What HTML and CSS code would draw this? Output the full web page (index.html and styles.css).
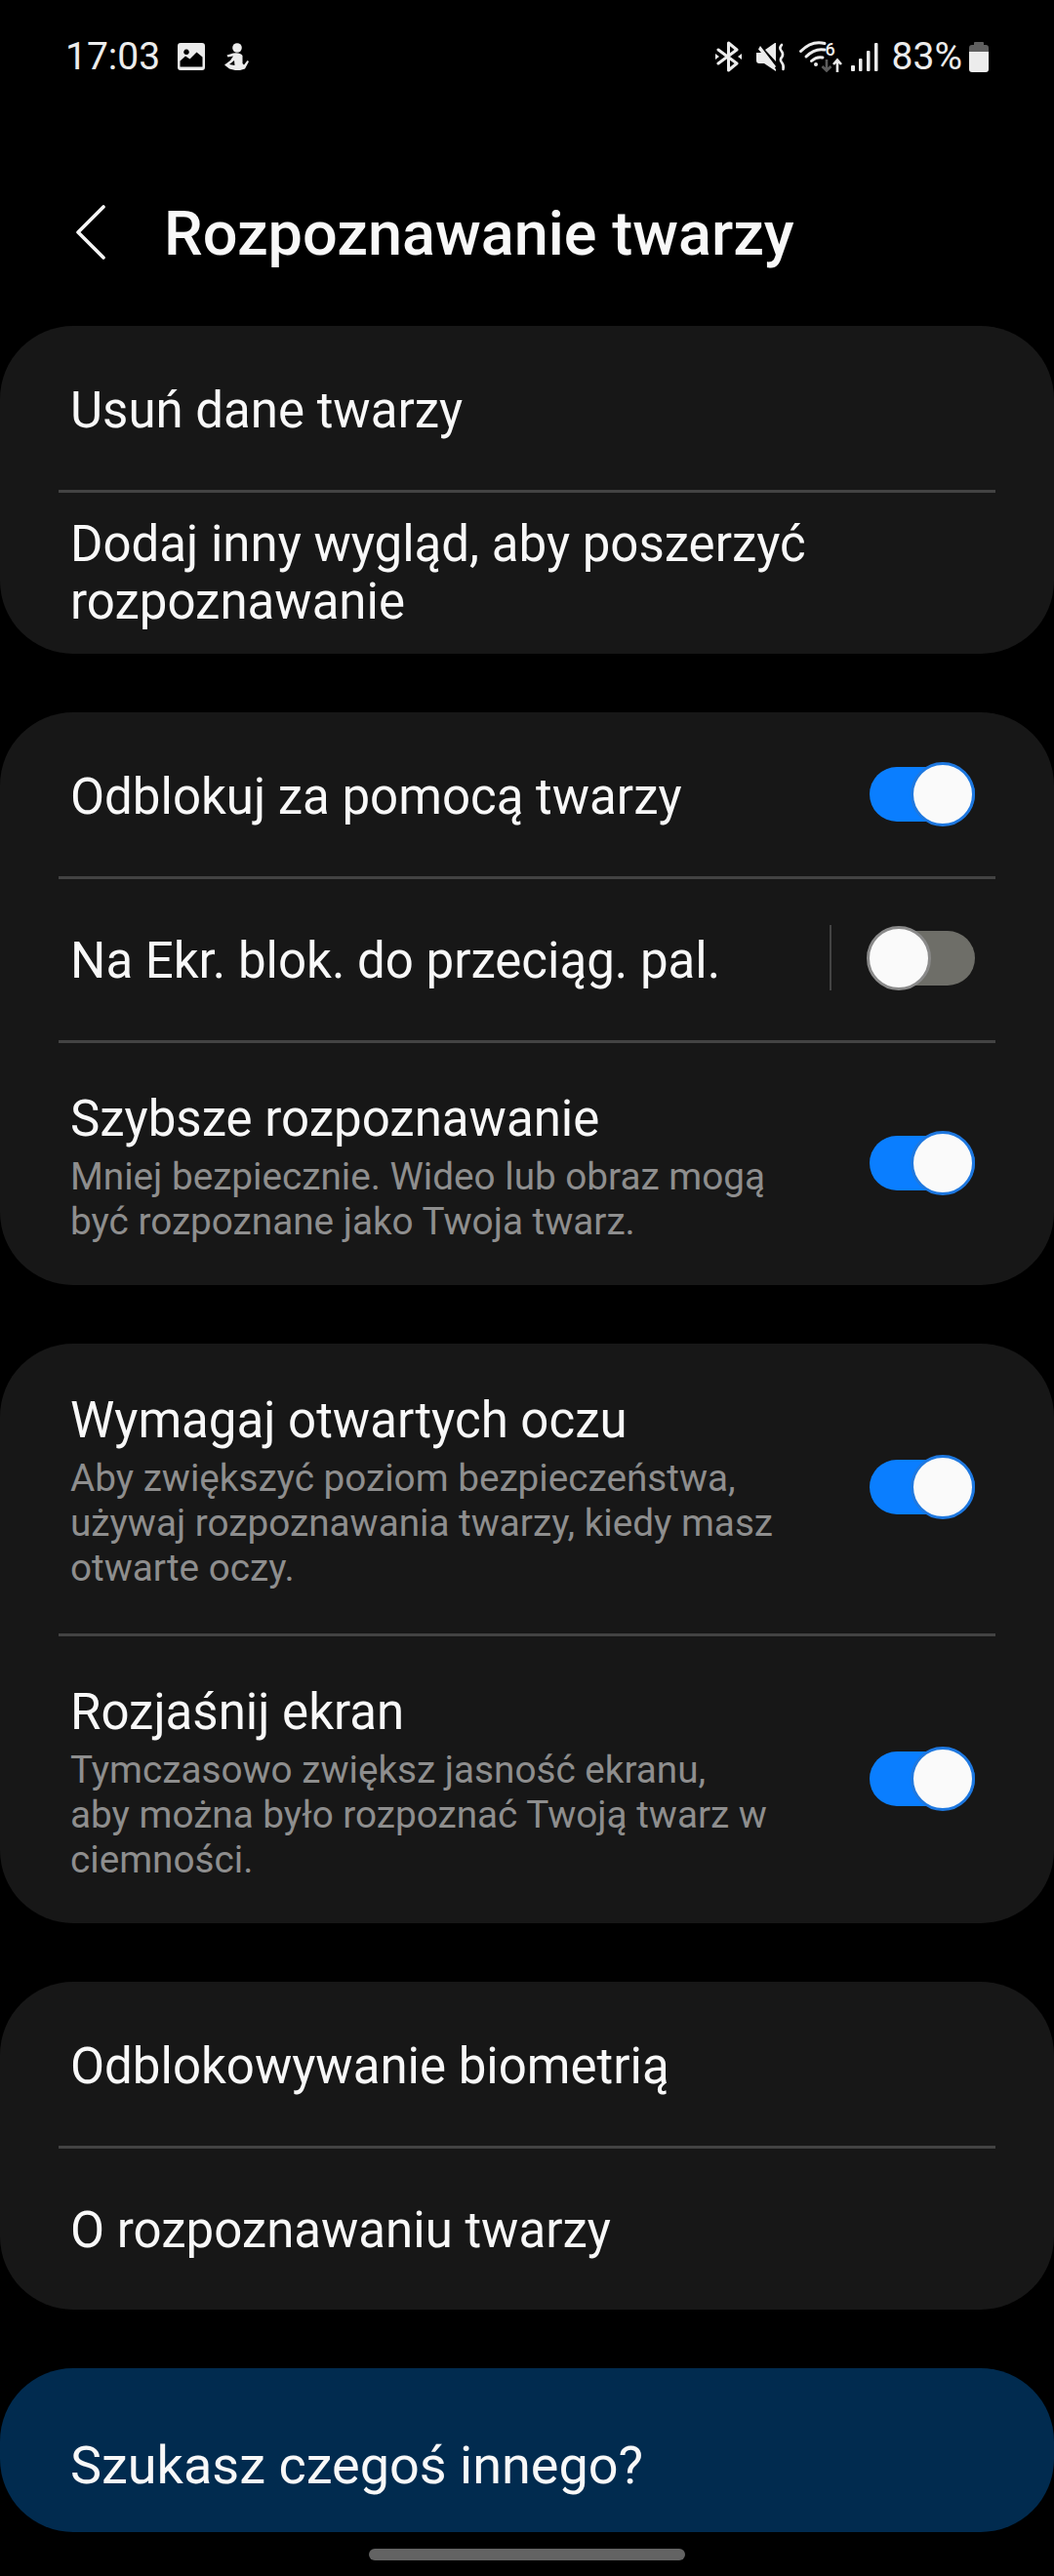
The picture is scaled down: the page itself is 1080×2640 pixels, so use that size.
FILE: index.html
```html
<!DOCTYPE html>
<html lang="pl">
<head>
<meta charset="utf-8">
<title>Rozpoznawanie twarzy</title>
<link rel="stylesheet" href="styles.css">
</head>
<body>
<div class="screen">
  <div class="status">
    <div class="status-left">
      <span class="time">17:03</span>
      <svg class="ic-img" viewBox="0 0 28 28"><path fill="#ececec" fill-rule="evenodd" d="M3 0h22a3 3 0 0 1 3 3v22a3 3 0 0 1-3 3H3a3 3 0 0 1-3-3V3a3 3 0 0 1 3-3zM2.500 24.500h23V14.500l-6-5-7 7-4.500-3-5.500 5zM9 6.500a2.800 2.800 0 1 0 .01 0z"/></svg>
      <svg class="ic-fig" viewBox="0 0 26 28"><circle cx="14" cy="5" r="4.800" fill="#ececec"/><path fill="#ececec" d="M10 10.500 L3.500 12.500 L4.500 14.500 L10 13.500 L7 18 L1 22.500 L6 26.500 L12 28 H17 L22 26.500 L26 19 L24.500 18 L21 22.500 L19.500 21 L19.500 13 Q17 9.500 10 10.500Z"/><path fill="#000" d="M6 22 L11 18 L11.500 23 Z"/></svg>
    </div>
    <div class="status-right">
      <svg class="ic-bt" viewBox="0 0 27 32"><path fill="none" stroke="#ececec" stroke-width="3" stroke-linejoin="round" stroke-linecap="round" d="M3 9 L22 23 L13.500 30 V2 L22 9 L3 23"/><path fill="#ececec" d="M0 13 L4 16 L0 19Z M27 13 L23 16 L27 19Z"/></svg>
      <svg class="ic-mute" viewBox="0 0 30 29"><path fill="#ececec" d="M0 10h5L2 6.500 4 3 20 24 18 27 13 23 Z"/><path fill="#ececec" d="M0 10h6l14 17v2L8 21H3a3 3 0 0 1-3-3z"/><path fill="#ececec" d="M9 7 19 0h1v19z"/><path fill="none" stroke="#ececec" stroke-width="2.600" stroke-linecap="round" d="M26 2q-3 3-.5 6t1 6q-3 3-.5 6t1.500 7"/></svg>
      <svg class="ic-wifi" viewBox="0 0 44 32"><g fill="none" stroke="#ececec" stroke-width="3" stroke-linecap="round"><path d="M1.500 10.500Q13-1 26 2.500"/><path d="M7 16Q16 7 26 9"/><path d="M12.500 20.500Q18 15.500 24 17"/></g><circle cx="17" cy="24" r="2" fill="#ececec"/><text x="26.500" y="15" class="wifi-six">6</text><path fill="none" stroke="#5c5c5c" stroke-width="2.600" d="M28 19V30M23.500 26l4.500 4.500 4.500-4.500"/><path fill="none" stroke="#ececec" stroke-width="2.600" d="M39 32V20M35 24l4-4.500 4 4.500"/></svg>
      <svg class="ic-sig" viewBox="0 0 28 29"><g fill="#ececec"><rect x="0" y="23" width="4" height="6" rx="1"/><rect x="8" y="16" width="3.500" height="13" rx="1"/><rect x="16" y="8" width="3.500" height="21" rx="1"/><rect x="24" y="0" width="3.500" height="29" rx="1"/></g></svg>
      <span class="pct">83%</span>
      <svg class="ic-bat" viewBox="0 0 20 31"><path fill="#5f5f5f" d="M6 0h8a1 1 0 0 1 1 1v2h2a3 3 0 0 1 3 3v4H0V6a3 3 0 0 1 3-3h2V1a1 1 0 0 1 1-1z"/><path fill="#ececec" d="M0 10h20v18a3 3 0 0 1-3 3H3a3 3 0 0 1-3-3z"/></svg>
    </div>
  </div>

  <header class="appbar">
    <svg class="back" viewBox="0 0 30 56"><path fill="none" stroke="#f5f5f5" stroke-width="3.600" stroke-linecap="round" stroke-linejoin="round" d="M28 2 2 28 28 54"/></svg>
    <h1 class="title">Rozpoznawanie twarzy</h1>
  </header>

  <section class="card">
    <div class="row h168"><div class="body"><div class="label">Usuń dane twarzy</div></div></div>
    <div class="row h168 lift"><div class="body two-line"><div class="label">Dodaj inny wygląd, aby poszerzyć rozpoznawanie</div></div></div>
  </section>

  <section class="card">
    <div class="row h168">
      <div class="body"><div class="label">Odblokuj za pomocą twarzy</div></div>
      <span class="sw on"><i></i></span>
    </div>
    <div class="row h168 lift">
      <div class="body"><div class="label">Na Ekr. blok. do przeciąg. pal.</div></div>
      <span class="vline"></span>
      <span class="sw off"><i></i></span>
    </div>
    <div class="row h251 lift">
      <div class="body has-sub">
        <div class="label">Szybsze rozpoznawanie</div>
        <div class="sub">Mniej bezpiecznie. Wideo lub obraz mogą<br>być rozpoznane jako Twoja twarz.</div>
      </div>
      <span class="sw on"><i></i></span>
    </div>
  </section>

  <section class="card">
    <div class="row h297 lift">
      <div class="body has-sub">
        <div class="label">Wymagaj otwartych oczu</div>
        <div class="sub">Aby zwiększyć poziom bezpieczeństwa,<br>używaj rozpoznawania twarzy, kiedy masz<br>otwarte oczy.</div>
      </div>
      <span class="sw on"><i></i></span>
    </div>
    <div class="row h297 lift">
      <div class="body has-sub">
        <div class="label">Rozjaśnij ekran</div>
        <div class="sub">Tymczasowo zwiększ jasność ekranu,<br>aby można było rozpoznać Twoją twarz w<br>ciemności.</div>
      </div>
      <span class="sw on"><i></i></span>
    </div>
  </section>

  <section class="card">
    <div class="row h168"><div class="body"><div class="label">Odblokowywanie biometrią</div></div></div>
    <div class="row h168 lift"><div class="body"><div class="label">O rozpoznawaniu twarzy</div></div></div>
  </section>

  <section class="card promo"><div class="label promo-label">Szukasz czegoś innego?</div></section>

  <div class="home"></div>
</div>
</body>
</html>
```
FILE: styles.css
```css
* { box-sizing: border-box; }
html, body { margin: 0; background: #000; }
.screen {
  width: 1080px;
  height: 2640px;
  overflow: hidden;
  background: #000;
  color: #f8f8f8;
  font-family: Roboto, "Noto Sans", sans-serif;
}
.status {
  display: flex;
  justify-content: space-between;
  align-items: center;
  height: 116px;
  padding: 0 67px 0 67px;
  color: #ececec;
}
.status-left, .status-right { display: flex; align-items: center; }
.time, .pct { font-size: 39px; line-height: 44px; letter-spacing: 0; }
.ic-img { width: 28px; height: 28px; margin-left: 18px; }
.ic-fig { width: 26px; height: 28px; margin-left: 19px; }
.ic-bt { width: 27px; height: 32px; }
.ic-mute { width: 30px; height: 29px; margin-left: 15px; }
.ic-wifi { width: 44px; height: 32px; margin-left: 14px; overflow: visible; }
.wifi-six { font: 500 18px Roboto, sans-serif; fill: #ececec; }
.ic-sig { width: 28px; height: 29px; margin-left: 9px; }
.pct { margin-left: 14px; }
.ic-bat { width: 20px; height: 31px; margin-left: 7px; }

.appbar { display: flex; align-items: center; height: 126px; margin-top: 61px; padding-left: 78px; margin-bottom: 31px; }
.back { width: 30px; height: 56px; margin-bottom: 4px; }
.title { margin: 0 0 0 60px; font-size: 63px; font-weight: 500; line-height: 70px; color: #f8f8f8; }

.card { background: #171717; border-radius: 75px; margin-bottom: 60px; overflow: hidden; }
.row {
  display: flex;
  align-items: center;
  margin: 0 60px;
  padding: 0 12px;
  border-top: 3px solid #434343;
}
.row:first-child { border-top: 0; }
.lift { padding-bottom: 3px; }
.h168 { height: 168px; }
.h251 { height: 251px; }
.h297 { height: 297px; }
.body { flex: 1; min-width: 0; padding-top: 5px; }
.two-line { padding-top: 2px; }
.has-sub { padding-top: 8px; }
.label { font-size: 51px; line-height: 59px; color: #f8f8f8; }
.sub { font-size: 38.700px; line-height: 46px; color: #8e8e8e; margin-top: 7px; }

.sw { position: relative; display: block; flex: none; width: 108px; height: 56px; border-radius: 28px; margin-right: 9px; }
.sw i { position: absolute; top: -5px; width: 66px; height: 66px; border-radius: 50%; background: #fafafa; }
.sw.on { background: #0a7eff; }
.sw.on i { right: 0; border: 3px solid #1e78e0; }
.sw.off { background: #6e6e68; margin-left: 39px; margin-bottom: 1px; }
.sw.off i { left: -3px; border: 3px solid #8a8a8a; }
.vline { flex: none; width: 2px; height: 67px; background: #434343; margin-bottom: 1px; }

.promo { height: 168px; background: #012b4f; display: flex; align-items: center; padding: 30px 72px 0; margin-bottom: 0; }
.promo-label { font-size: 54px; }
.home { width: 324px; height: 12px; margin: 17px auto 0; border-radius: 6px; background: #636363; }
```
